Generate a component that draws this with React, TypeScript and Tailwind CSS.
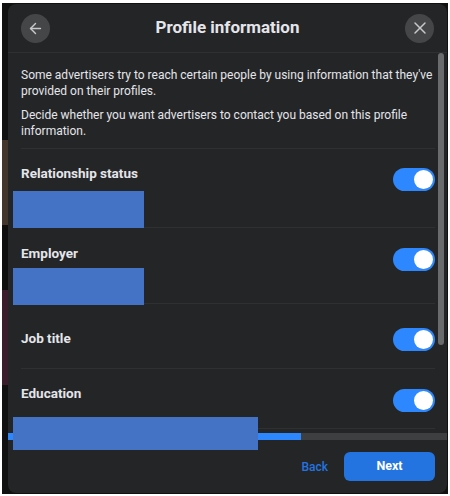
import { ArrowLeft, X } from 'lucide-react'

interface RowInfo {
  label: string
  height: string
  labelPad: string
  togglePad: string
  redactGap: string
}

const ROWS: RowInfo[] = [
  { label: 'Relationship status', height: 'h-[79px]', labelPad: 'pt-[15px]', togglePad: 'pt-[19px]', redactGap: 'mt-[9px]' },
  { label: 'Employer', height: 'h-[76px]', labelPad: 'pt-[16px]', togglePad: 'pt-[20px]', redactGap: 'mt-[6px]' },
  { label: 'Job title', height: 'h-[65px]', labelPad: 'pt-[25px]', togglePad: 'pt-[24px]', redactGap: '' },
  { label: 'Education', height: 'h-[60px]', labelPad: 'pt-[15px]', togglePad: 'pt-[20px]', redactGap: '' },
]

function Toggle() {
  return (
    <div className="flex h-[23px] w-[42px] items-center justify-end rounded-full bg-[#2d88ff] pr-[2px]">
      <div className="h-[19px] w-[19px] rounded-full bg-white" />
    </div>
  )
}

function CircleButton({ children }: { children: React.ReactNode }) {
  return (
    <button className="flex h-[29px] w-[29px] items-center justify-center rounded-full bg-[#454647] text-[#c8c9cb]">
      {children}
    </button>
  )
}

export default function App() {
  return (
    <div className="h-[496px] w-[450px] bg-white pl-[2px] pr-[2px] pt-[3px] pb-[2px] font-['Roboto',sans-serif]">
      <div className="flex h-[491px] w-[446px] bg-[#111111]">
        {/* Page peeking out behind the dialog */}
        <div className="flex w-[6px] shrink-0 flex-col pt-[137px]">
          <div className="h-[85px] bg-[#43362c]" />
          <div className="h-[65px] bg-[#0e0e0e]" />
          <div className="h-[95px] bg-[#3a1c2b]" />
        </div>

        <div className="relative mt-[1px] flex h-[489px] w-[439px] flex-col overflow-hidden rounded-lg bg-[#242526]">
          {/* Header */}
          <div className="flex h-[49px] shrink-0 items-center justify-between border-b border-[#2f3031] pl-[13px] pr-[13px]">
            <CircleButton>
              <ArrowLeft className="h-[17px] w-[17px]" strokeWidth={2} />
            </CircleButton>
            <h2 className="text-[17px] font-bold text-[#e4e6eb]">Profile information</h2>
            <CircleButton>
              <X className="h-[20px] w-[20px]" strokeWidth={1.75} />
            </CircleButton>
          </div>

          {/* Intro */}
          <div className="ml-[13px] mr-[12px] h-[96px] shrink-0 border-b border-[#2f3031] pt-[14px] text-[12px] leading-[16px] text-[#e4e6eb]">
            <p>Some advertisers try to reach certain people by using information that they've provided on their profiles.</p>
            <p className="mt-[8px]">Decide whether you want advertisers to contact you based on this profile information.</p>
          </div>

          {/* Rows */}
          {ROWS.map((row) => (
            <div
              key={row.label}
              className={`ml-[13px] mr-[12px] flex shrink-0 justify-between border-b border-[#2f3031] ${row.height}`}
            >
              <div className={row.labelPad}>
                <div className="text-[13.5px] font-bold leading-[18px] text-[#e4e6eb]">{row.label}</div>
                {row.redactGap && <div className={`-ml-[8px] h-[37px] w-[131px] bg-[#4472c4] ${row.redactGap}`} />}
              </div>
              <div className={row.togglePad}>
                <Toggle />
              </div>
            </div>
          ))}

          {/* Vertical scrollbar */}
          <div className="absolute right-[3px] top-[49px] h-[292px] w-[6px] rounded-full bg-[#6a6b6c]" />

          {/* Horizontal scrollbar */}
          <div className="absolute left-0 top-[429px] h-[7px] w-full bg-[#3e3f40]">
            <div className="h-full w-[293px] bg-[#2d88ff]" />
          </div>

          {/* Redaction over the education value */}
          <div className="absolute left-[5px] top-[413px] h-[33px] w-[245px] bg-[#4472c4]" />

          {/* Footer */}
          <div className="absolute bottom-[12px] right-[12px] flex items-center gap-[16px]">
            <button className="text-[12px] font-medium text-[#2374e1]">Back</button>
            <button className="h-[29px] w-[91px] rounded-md bg-[#2374e1] text-[12.5px] font-bold text-white">Next</button>
          </div>
        </div>
      </div>
    </div>
  )
}
